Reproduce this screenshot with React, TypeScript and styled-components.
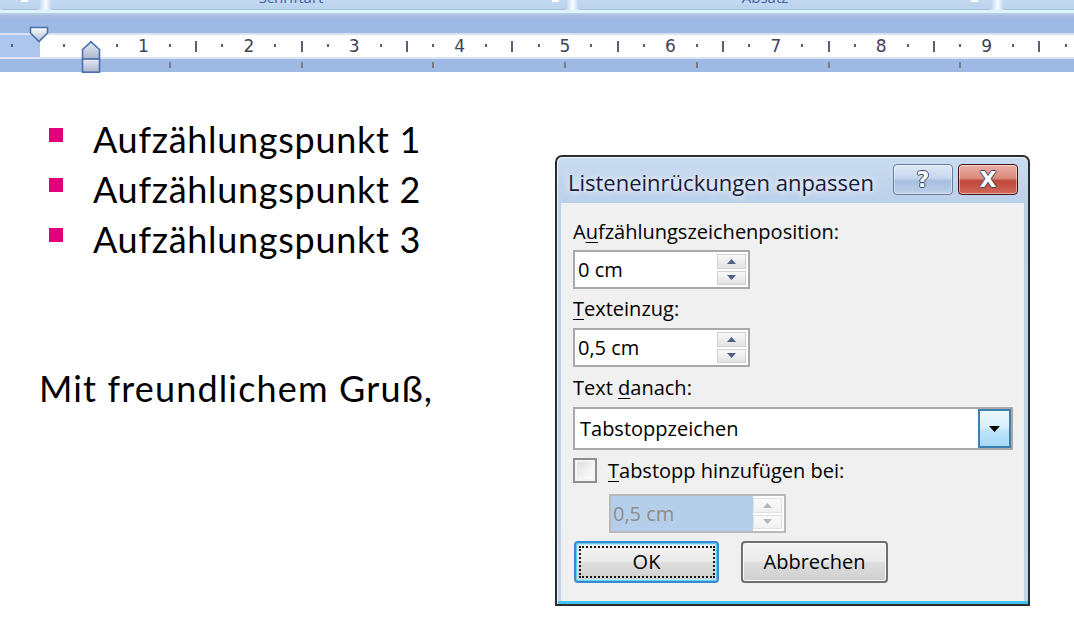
import React from 'react';
import styled, { createGlobalStyle } from 'styled-components';

const Global = createGlobalStyle`
  html, body { margin: 0; padding: 0; background: #ffffff; }
  body { width: 1074px; height: 636px; overflow: hidden; }
`;

const CM = 105.4;
const ORIGIN = 38;
const UI = `"Open Sans", "Noto Sans", "DejaVu Sans", sans-serif`;

const Page = styled.div`
  position: relative;
  width: 1074px;
  height: 636px;
  overflow: hidden;
  background: #ffffff;
`;

/* ---------- Ribbon group labels (cut off at top) ---------- */
const GroupBar = styled.div`
  display: flex;
  height: 10px;
  overflow: hidden;
  background: #d8e7f6;
`;

const GroupTab = styled.div<{ $w: number; $pr?: number }>`
  position: relative;
  width: ${(p) => p.$w}px;
  flex: none;
  display: flex;
  justify-content: center;
  padding-right: ${(p) => p.$pr ?? 0}px;
  box-sizing: border-box;
  background: linear-gradient(#c4d9f1, #bcd3ee);
  border-bottom: 1px solid #a9c2e2;
  border-radius: 0 0 3px 3px;
`;

const GroupTitle = styled.span`
  font-family: ${UI};
  font-size: 15px;
  line-height: 16px;
  margin-top: -11px;
  color: #3d62a6;
`;

const Launcher = styled.span<{ $r: number }>`
  position: absolute;
  right: ${(p) => p.$r}px;
  top: 0;
  width: 7px;
  height: 2px;
  background: #ffffff;
`;

const GroupGap = styled.div`
  width: 11px;
  flex: none;
  background: linear-gradient(to right, #c6daf1, #f4f9fe 45%, #f4f9fe 55%, #c6daf1);
`;

const Stripe = styled.div<{ $h: number; $c: string }>`
  height: ${(p) => p.$h}px;
  background: ${(p) => p.$c};
`;

/* ---------- Ruler ---------- */
const RulerBlock = styled.div`
  position: relative;
`;

const RulerRow = styled.div`
  position: relative;
  display: flex;
  height: 22px;
`;

const RulerMargin = styled.div`
  width: 40px;
  flex: none;
  background: #adc6ee;
`;

const RulerPaper = styled.div`
  flex: 1;
  background: #ffffff;
`;

const Dot = styled.span`
  position: absolute;
  top: 9px;
  width: 2px;
  height: 3px;
  margin-left: -1px;
  background: #5b5f78;
`;

const HalfMark = styled.span`
  position: absolute;
  top: 6px;
  width: 2px;
  height: 11px;
  margin-left: -1px;
  background: #5b5f78;
`;

const Num = styled.span`
  position: absolute;
  top: 1px;
  width: 20px;
  margin-left: -10px;
  text-align: center;
  font-family: "DejaVu Sans", sans-serif;
  font-size: 17px;
  line-height: 20px;
  color: #3f4159;
`;

const TabBand = styled.div`
  position: relative;
  height: 13px;
  background: #9db9e4;
`;

const TabTick = styled.span`
  position: absolute;
  top: 3px;
  width: 2px;
  height: 6px;
  margin-left: -1px;
  background: #7b7d85;
`;

const Marker = styled.svg<{ $l: number; $t: number }>`
  position: absolute;
  left: ${(p) => p.$l}px;
  top: ${(p) => p.$t}px;
  overflow: visible;
`;

/* ---------- Document ---------- */
const Doc = styled.div`
  padding: 42px 0 0 38px;
  font-family: Lato, "Liberation Sans", sans-serif;
  color: #000000;
  letter-spacing: 0.7px;
`;

const List = styled.ul`
  list-style: none;
  margin: 0;
  padding: 0;
`;

const Item = styled.li`
  display: flex;
  align-items: flex-start;
  height: 50px;
  font-size: 36px;
  line-height: 50px;
`;

const Bullet = styled.span`
  width: 14px;
  height: 14px;
  margin: 14px 0 0 11px;
  flex: none;
  background: #e2007a;
`;

const ItemText = styled.span`
  margin-left: 30px;
`;

const Greeting = styled.p`
  margin: 99px 0 0 1px;
  font-size: 36px;
  line-height: 50px;
  letter-spacing: 1.15px;
`;

/* ---------- Dialog ---------- */
const Window = styled.div`
  position: absolute;
  left: 555px;
  top: 155px;
  width: 475px;
  height: 451px;
  box-sizing: border-box;
  border: 2px solid #2c2c2c;
  border-radius: 7px 7px 0 0;
  padding: 0 4px 3px 4px;
  display: flex;
  flex-direction: column;
  background: linear-gradient(
    #cadcf0 0,
    #bcd1ea 44px,
    #c2d5ec calc(100% - 3px),
    #3fc3ef calc(100% - 3px)
  );
  box-shadow: inset 1px 1px 0 rgba(255, 255, 255, 0.7);
`;

const TitleBar = styled.div`
  height: 46px;
  flex: none;
  display: flex;
  align-items: flex-start;
  padding: 7px 6px 0 7px;
  box-sizing: border-box;
`;

const Caption = styled.span`
  margin-top: 3px;
  font-family: ${UI};
  font-size: 22px;
  line-height: 30px;
  color: #1b1b3a;
  text-shadow: 0 0 6px rgba(255, 255, 255, 0.9), 0 0 10px rgba(255, 255, 255, 0.7);
  flex: 1;
  white-space: nowrap;
`;

const CaptionButton = styled.div<{ $close?: boolean }>`
  width: 60px;
  height: 31px;
  box-sizing: border-box;
  margin-left: ${(p) => (p.$close ? 5 : 0)}px;
  border: 1px solid ${(p) => (p.$close ? '#4a1313' : '#6b7b97')};
  border-radius: 4px;
  display: flex;
  align-items: center;
  justify-content: center;
  background: ${(p) =>
    p.$close
      ? 'linear-gradient(#eab0a6 0%, #d98a7c 45%, #c0453a 55%, #d06a5a 100%)'
      : 'linear-gradient(#dce8f6 0%, #c7d7ec 45%, #a9bfdf 55%, #bdd0ea 100%)'};
  box-shadow: inset 0 0 0 1px rgba(255, 255, 255, 0.45);
  font-family: "DejaVu Sans", sans-serif;
  font-weight: bold;
  font-size: 22px;
  line-height: 1;
  color: #ffffff;
  text-shadow: -1px 0 #3a4660, 1px 0 #3a4660, 0 -1px #3a4660, 0 1px #3a4660;
`;

const Client = styled.div`
  flex: 1;
  background: #f0f0f0;
  border: 1px solid #e9eff7;
  border-bottom: none;
  padding: 17px 0 0 11px;
  display: flex;
  flex-direction: column;
  align-items: flex-start;
  font-family: ${UI};
  font-size: 20px;
  color: #000000;
`;

const Label = styled.div<{ $mt: number }>`
  margin-top: ${(p) => p.$mt}px;
  height: 22px;
  line-height: 22px;
  white-space: nowrap;
`;

const Key = styled.span`
  text-decoration: underline;
  text-underline-offset: 3px;
  text-decoration-thickness: 1px;
`;

const SpinBox = styled.div<{ $mt: number; $ml?: number; $disabled?: boolean }>`
  margin-top: ${(p) => p.$mt}px;
  margin-left: ${(p) => p.$ml ?? 0}px;
  width: 177px;
  height: 39px;
  box-sizing: border-box;
  border: 2px solid ${(p) => (p.$disabled ? '#b9b9b9' : '#a9a9a9')};
  background: #ffffff;
  display: flex;
`;

const SpinValue = styled.div<{ $disabled?: boolean }>`
  flex: 1;
  display: flex;
  align-items: center;
  padding-left: ${(p) => (p.$disabled ? 2 : 3)}px;
  background: ${(p) => (p.$disabled ? '#b5cfea' : 'transparent')};
  color: ${(p) => (p.$disabled ? '#8d8d8d' : '#000000')};
  line-height: 22px;
`;

const SpinColumn = styled.div`
  width: 29px;
  flex: none;
  display: flex;
  flex-direction: column;
  gap: 2px;
  padding: 2px 2px 2px 0;
`;

const SpinButton = styled.div<{ $disabled?: boolean }>`
  flex: 1;
  display: flex;
  align-items: center;
  justify-content: center;
  background: ${(p) =>
    p.$disabled ? 'linear-gradient(#fbfbfb, #f0f0f0)' : 'linear-gradient(#f8f8f8, #e3e3e3)'};
  border: 1px solid ${(p) => (p.$disabled ? '#e0e0e0' : '#d0d0d0')};
`;

const Combo = styled.div`
  margin-top: 8px;
  width: 440px;
  height: 43px;
  box-sizing: border-box;
  border: 2px solid #a9a9a9;
  background: #ffffff;
  display: flex;
`;

const ComboValue = styled.div`
  flex: 1;
  display: flex;
  align-items: center;
  padding-left: 5px;
`;

const ComboButton = styled.div`
  width: 33px;
  flex: none;
  box-sizing: border-box;
  border: 2px solid #3c7fb1;
  background: linear-gradient(#eaf6fd, #d9f0fc 45%, #bee6fd 55%, #a7d9f5);
  display: flex;
  align-items: center;
  justify-content: center;
`;

const CheckRow = styled.div`
  margin-top: 8px;
  height: 25px;
  display: flex;
  align-items: center;
  gap: 11px;
`;

const CheckBox = styled.div`
  width: 24px;
  height: 25px;
  box-sizing: border-box;
  border: 2px solid #8e8f8f;
  background: linear-gradient(135deg, #dadada, #f4f4f4 60%, #ffffff);
  box-shadow: inset 0 0 0 2px #f4f4f4;
`;

const ButtonRow = styled.div`
  margin-top: 8px;
  margin-left: 1px;
  display: flex;
  gap: 22px;
`;

const PushButton = styled.div<{ $w: number; $default?: boolean }>`
  position: relative;
  width: ${(p) => p.$w}px;
  height: 42px;
  box-sizing: border-box;
  border: 2px solid ${(p) => (p.$default ? '#3a8ad0' : '#707070')};
  border-radius: 4px;
  background: linear-gradient(#f2f2f2 0%, #ebebeb 48%, #dddddd 52%, #cfcfcf 100%);
  box-shadow: ${(p) =>
    p.$default ? 'inset 0 0 0 1px #5fcaf3, inset 0 0 0 2px #b8e6f8' : 'inset 0 0 0 1px #fbfbfb'};
  display: flex;
  align-items: center;
  justify-content: center;
  line-height: 22px;
`;

const FocusRing = styled.span`
  position: absolute;
  inset: 3px 2px 3px 3px;
  border: 2px dotted #1a1a1a;
  pointer-events: none;
`;

const Arrow: React.FC<{ up?: boolean; color: string; w?: number; h?: number }> = ({
  up,
  color,
  w = 10,
  h = 5,
}) => (
  <svg width={w} height={h} viewBox={`0 0 ${w} ${h}`}>
    <polygon points={up ? `0,${h} ${w / 2},0 ${w},${h}` : `0,0 ${w},0 ${w / 2},${h}`} fill={color} />
  </svg>
);

const Spinner: React.FC<{ value: string; mt: number; ml?: number; disabled?: boolean }> = ({
  value,
  mt,
  ml,
  disabled,
}) => (
  <SpinBox $mt={mt} $ml={ml} $disabled={disabled}>
    <SpinValue $disabled={disabled}>{value}</SpinValue>
    <SpinColumn>
      <SpinButton $disabled={disabled}>
        <Arrow up color={disabled ? '#b5b5b5' : '#4d6188'} w={9} h={5} />
      </SpinButton>
      <SpinButton $disabled={disabled}>
        <Arrow color={disabled ? '#b5b5b5' : '#4d6188'} w={9} h={5} />
      </SpinButton>
    </SpinColumn>
  </SpinBox>
);

type Tick = { x: number; kind: 'dot' | 'half' | 'num'; n?: number };

const ticks: Tick[] = [];
for (let k = -1; k <= 41; k++) {
  const cm = k / 4;
  const x = ORIGIN + cm * CM;
  if (x > 1074 || k === 0) continue;
  if (k % 4 === 0) ticks.push({ x, kind: 'num', n: cm });
  else if (k % 2 === 0) ticks.push({ x, kind: 'half' });
  else ticks.push({ x, kind: 'dot' });
}

const tabStops: number[] = [];
for (let i = 1; ORIGIN + i * 1.25 * CM < 1074; i++) tabStops.push(ORIGIN + i * 1.25 * CM);

const Ruler: React.FC = () => (
  <RulerBlock>
    <Stripe $h={14} $c="#9db9e4" />
    <Stripe $h={2} $c="#dbe1f0" />
    <RulerRow>
      <RulerMargin />
      <RulerPaper />
      {ticks.map((t, i) =>
        t.kind === 'num' ? (
          <Num key={i} style={{ left: t.x }}>
            {t.n}
          </Num>
        ) : t.kind === 'half' ? (
          <HalfMark key={i} style={{ left: t.x }} />
        ) : (
          <Dot key={i} style={{ left: t.x }} />
        )
      )}
    </RulerRow>
    <Stripe $h={2} $c="#dde3f0" />
    <TabBand>
      {tabStops.map((x, i) => (
        <TabTick key={i} style={{ left: x }} />
      ))}
    </TabBand>
    <Marker $l={30} $t={8} width={19} height={16} viewBox="0 0 19 16">
      <defs>
        <linearGradient id="mg1" x1="0" y1="0" x2="0" y2="1">
          <stop offset="0" stopColor="#ffffff" />
          <stop offset="1" stopColor="#aeb9d2" />
        </linearGradient>
      </defs>
      <polygon points="0.5,0.5 17.5,0.5 17.5,6 9,14.5 0.5,6" fill="url(#mg1)" stroke="#4b6fb1" strokeWidth="1.6" />
    </Marker>
    <Marker $l={82} $t={22} width={19} height={32} viewBox="0 0 19 32">
      <defs>
        <linearGradient id="mg2" x1="0" y1="0" x2="0" y2="1">
          <stop offset="0" stopColor="#e9edf6" />
          <stop offset="1" stopColor="#a8b4cf" />
        </linearGradient>
      </defs>
      <polygon points="9,0.8 17.5,8.5 17.5,18 0.5,18 0.5,8.5" fill="url(#mg2)" stroke="#4b6fb1" strokeWidth="1.6" />
      <rect x="0.5" y="18" width="17" height="13.2" fill="url(#mg2)" stroke="#4b6fb1" strokeWidth="1.6" />
    </Marker>
  </RulerBlock>
);

const Dialog: React.FC = () => (
  <Window>
    <TitleBar>
      <Caption>Listeneinrückungen anpassen</Caption>
      <CaptionButton>?</CaptionButton>
      <CaptionButton $close>X</CaptionButton>
    </TitleBar>
    <Client>
      <Label $mt={0}>
        A<Key>u</Key>fzählungszeichenposition:
      </Label>
      <Spinner value="0 cm" mt={7} />
      <Label $mt={9}>
        <Key>T</Key>exteinzug:
      </Label>
      <Spinner value="0,5 cm" mt={8} />
      <Label $mt={10}>
        Text <Key>d</Key>anach:
      </Label>
      <Combo>
        <ComboValue>Tabstoppzeichen</ComboValue>
        <ComboButton>
          <Arrow color="#000000" w={11} h={6} />
        </ComboButton>
      </Combo>
      <CheckRow>
        <CheckBox />
        <span>
          <Key>T</Key>abstopp hinzufügen bei:
        </span>
      </CheckRow>
      <Spinner value="0,5 cm" mt={11} ml={36} disabled />
      <ButtonRow>
        <PushButton $w={145} $default>
          <FocusRing />
          OK
        </PushButton>
        <PushButton $w={147}>Abbrechen</PushButton>
      </ButtonRow>
    </Client>
  </Window>
);

export default function App() {
  return (
    <Page>
      <Global />
      <GroupBar>
        <GroupTab $w={40}>
          <Launcher $r={12} />
        </GroupTab>
        <GroupGap />
        <GroupTab $w={516} $pr={36}>
          <GroupTitle>Schriftart</GroupTitle>
          <Launcher $r={8} />
        </GroupTab>
        <GroupGap />
        <GroupTab $w={414} $pr={40}>
          <GroupTitle>Absatz</GroupTitle>
          <Launcher $r={14} />
        </GroupTab>
        <GroupGap />
        <GroupTab $w={80} />
      </GroupBar>
      <Stripe $h={3} $c="#def4fb" />
      <Stripe $h={2} $c="#b8cbe6" />
      <Stripe $h={4} $c="#a7bbe0" />
      <Ruler />
      <Doc>
        <List>
          <Item>
            <Bullet />
            <ItemText>Aufzählungspunkt 1</ItemText>
          </Item>
          <Item>
            <Bullet />
            <ItemText>Aufzählungspunkt 2</ItemText>
          </Item>
          <Item>
            <Bullet />
            <ItemText>Aufzählungspunkt 3</ItemText>
          </Item>
        </List>
        <Greeting>Mit freundlichem Gruß,</Greeting>
      </Doc>
      <Dialog />
    </Page>
  );
}
